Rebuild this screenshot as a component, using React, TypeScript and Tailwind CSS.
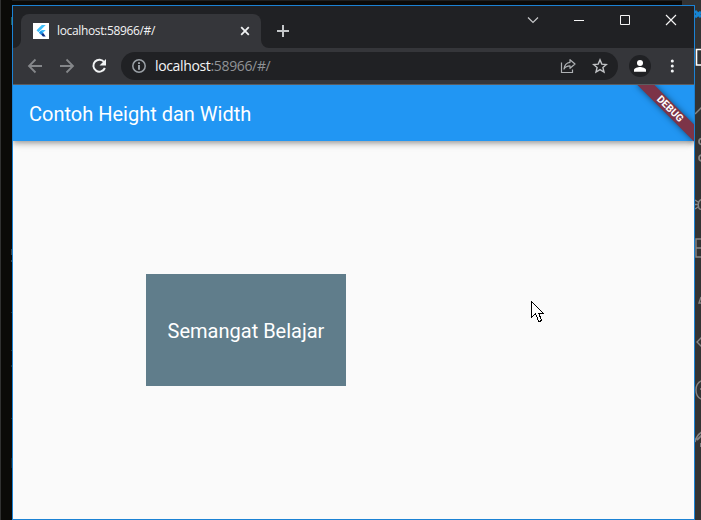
import React from "react";

const FlutterLogo = () => (
  <svg width="16" height="16" viewBox="0 0 16 16" className="shrink-0 bg-white">
    <path d="M8.800 2h3.900L5.500 9.200 3.500 7.300z" fill="#42c0fa" />
    <path d="M8.900 7.100h3.800L10 9.800 8.100 11.700 6 9.700z" fill="#42c0fa" />
    <path d="M8.100 11.500 10 9.700l2.700 3.900H9.900z" fill="#0b2f87" />
    <path d="m6 9.700 2-1.900 2 1.900-2 1.900z" fill="#1d90e6" />
  </svg>
);

const TabStrip = () => (
  <div className="relative flex h-[42px] shrink-0 bg-[#202124]">
    <div className="relative ml-2 mt-2 flex h-[34px] w-[240px] items-center rounded-t-lg bg-[#35363a] pl-3 pr-[10px]">
      <FlutterLogo />
      <span className="ml-2 whitespace-nowrap font-['Open_Sans','Noto_Sans',sans-serif] text-[12px] leading-4 tracking-[-0.35px] text-[#f2f3f4]">
        localhost:58966/#/
      </span>
      <svg width="12" height="12" viewBox="0 0 12 12" className="ml-auto" fill="none" stroke="#f1f3f4" strokeWidth="1.8">
        <path d="m2.2 2.2 7.6 7.6M9.8 2.2 2.2 9.8" />
      </svg>
      <svg width="8" height="8" viewBox="0 0 8 8" className="absolute -left-2 bottom-0">
        <path d="M8 0v8H0a8 8 0 0 0 8-8" fill="#35363a" />
      </svg>
      <svg width="8" height="8" viewBox="0 0 8 8" className="absolute -right-2 bottom-0">
        <path d="M0 0v8h8a8 8 0 0 1-8-8" fill="#35363a" />
      </svg>
    </div>
    <svg width="14" height="14" viewBox="0 0 14 14" className="ml-[15px] mt-[18px]" fill="none" stroke="#c4c7c9" strokeWidth="2">
      <path d="M7 1v12M1 7h12" />
    </svg>
    <div className="ml-auto flex h-7 text-[#f5f5f5]">
      <svg width="46" height="28" viewBox="0 0 46 28" fill="none" stroke="#c7c8ca" strokeWidth="1.2">
        <path d="m16 11.500 5 5 5-5" />
      </svg>
      <svg width="46" height="28" viewBox="0 0 46 28" fill="none" stroke="currentColor">
        <path d="M16 14.500h10" />
      </svg>
      <svg width="46" height="28" viewBox="0 0 46 28" fill="none" stroke="currentColor">
        <path d="M16.500 9.500h9v9h-9z" />
      </svg>
      <svg width="44" height="28" viewBox="0 0 44 28" fill="none" stroke="currentColor" strokeWidth="1.15">
        <path d="m16 9 10 10M26 9 16 19" />
      </svg>
    </div>
  </div>
);

const Toolbar = () => (
  <div className="flex h-[36px] shrink-0 items-center bg-[#35363a]">
    <svg width="16" height="16" viewBox="0 0 16 16" className="ml-[14px]" fill="none" stroke="#85878a" strokeWidth="1.8">
      <path d="M15 8H2.5M8.5 1.5 2 8l6.5 6.5" />
    </svg>
    <svg width="16" height="16" viewBox="0 0 16 16" className="ml-4" fill="none" stroke="#85878a" strokeWidth="1.8">
      <path d="M1 8h12.5M7.5 1.5 14 8l-6.5 6.5" />
    </svg>
    <svg width="16" height="16" viewBox="0 0 16 16" className="ml-4">
      <path d="M13.3 4.2A6 6 0 1 0 13.9 10" fill="none" stroke="#f1f3f4" strokeWidth="2" />
      <path d="M15 1v6.500H8.500z" fill="#f1f3f4" />
    </svg>
    <div className="ml-[14px] flex h-7 w-[497px] items-center rounded-full bg-[#202124] pl-[11px] pr-[10px]">
      <svg width="14" height="14" viewBox="0 0 14 14" fill="none" stroke="#9aa0a6" strokeWidth="1.5">
        <circle cx="7" cy="7" r="6.2" />
        <path d="M7 3.300v1.600M7 6v4.800" strokeWidth="2" />
      </svg>
      <span className="ml-[9px] whitespace-nowrap font-['Open_Sans','Noto_Sans',sans-serif] text-[14px] leading-5 tracking-[-0.35px] text-[#8f9296]">
        <span className="text-[#f4f5f6]">localhost</span>:58966/#/
      </span>
      <svg width="16" height="16" viewBox="0 0 16 16" className="ml-auto" fill="none" stroke="#aeb1b4" strokeWidth="1.2">
        <path d="M1.500 4.500v10h11v-3" />
        <path d="M10 1.700 15 6l-5 4.300V7.800C7 7.800 5.200 8.800 4 11c.4-3.700 2.500-6.300 6-6.700z" strokeLinejoin="round" />
      </svg>
      <svg width="16" height="16" viewBox="0 0 16 16" className="ml-4" fill="none" stroke="#c1c3c6" strokeWidth="1.4">
        <path d="m8 1.900 1.800 4.200 4.600.4-3.500 3 1.100 4.500L8 11.600 4 14l1.100-4.500-3.500-3 4.600-.4z" />
      </svg>
    </div>
    <svg width="22" height="22" viewBox="0 0 22 22" className="ml-[11px]">
      <circle cx="11" cy="11" r="11" fill="#202124" />
      <circle cx="11" cy="8" r="3" fill="#fff" />
      <path d="M5 16.800v-1.700c0-2.100 3.900-3.100 6-3.100s6 1 6 3.100v1.700z" fill="#fff" />
    </svg>
    <svg width="4" height="14" viewBox="0 0 4 14" className="ml-[19px]" fill="#f1f3f4">
      <circle cx="2.3" cy="2" r="1.55" />
      <circle cx="2.3" cy="7" r="1.55" />
      <circle cx="2.3" cy="12" r="1.55" />
    </svg>
  </div>
);

const Page = () => (
  <main className="relative flex-1 overflow-hidden bg-[#fafafa] font-[Roboto,sans-serif]">
    <header className="flex h-14 items-center bg-[#2196f3] px-4 text-[20px] leading-6 text-white shadow-[0_2px_4px_-1px_rgba(0,0,0,0.2),0_4px_5px_0_rgba(0,0,0,0.14),0_1px_10px_0_rgba(0,0,0,0.12)]">
      <h1 className="whitespace-nowrap pt-0.5">Contoh Height dan Width</h1>
    </header>
    <div className="ml-[133px] mt-[133px] flex h-28 w-[200px] items-center justify-center bg-[#607d8b] text-[20px] leading-6 text-white">
      <span className="whitespace-nowrap pt-0.5">Semangat Belajar</span>
    </div>
    <div className="absolute -right-10 top-7 flex h-3 w-20 origin-[40px_-28px] rotate-45 items-center justify-center bg-[#7c3448] text-[10.2px] font-bold leading-3 text-white shadow-[0_0_6px_rgba(0,0,0,0.5)]">
      DEBUG
    </div>
  </main>
);

const ActivityBar = () => (
  <svg width="6" height="520" viewBox="695 0 6 520" className="shrink-0 bg-[#333]" fill="none" stroke="#858585" strokeWidth="1.4">
    <path d="m695 11 6 6m-6 0 6-5" stroke="#1684d2" strokeWidth="3" />
    <path d="M702 49.500h-5.500v15.500h5.500" stroke="#fff" strokeWidth="1.6" />
    <path d="m695 114 7-7" />
    <path d="M702 138.500c-4 0-4 6 0 6M702 155c-4 0-4 6 0 6" strokeWidth="1.7" />
    <path d="M702 199.500c-5 1-5 10 0 10M695 200l3 2M695 204.500h3M695 209l3-2" />
    <path d="M702 239h-6v18h6M696 248h6" />
    <path d="M701 297l-2 6h3" />
    <path d="m702 337-5 5 5 5" />
    <path d="M702 380.500c-8 3-8 16 0 19M701 389h-1" />
    <path d="M695 442c1-5 3-8 7-10M697 440l5-5M701 443v4" strokeWidth="1.8" />
  </svg>
);

const WindowsCursor = () => (
  <svg width="13" height="21" viewBox="0 0 13 21" className="absolute left-[531px] top-[301px]" shapeRendering="crispEdges">
    <path d="M.5.5v16l4-4 3 7.500h2l1-1-3-7h4.500z" fill="#fff" stroke="#000" />
  </svg>
);

export default function App() {
  return (
    <div className="relative flex h-[520px] w-[701px] overflow-hidden bg-[#0b0a08]">
      <div className="relative w-3 shrink-0 border-l border-[#323232]">
        <i className="absolute left-[10px] top-[17px] h-2 w-px bg-[#245e5e]" />
        <i className="absolute left-[10px] top-[249px] h-[6px] w-px bg-[#38454b]" />
        <i className="absolute left-[10px] top-[260px] h-0.5 w-px bg-[#38454b]" />
        <i className="absolute left-[10px] top-[312px] h-px w-px bg-[#283733]" />
        <i className="absolute left-[10px] top-[350px] h-px w-px bg-[#283733]" />
        <i className="absolute left-[10px] top-[365px] h-0.5 w-px bg-[#22312e]" />
        <i className="absolute left-[10px] top-[418px] h-px w-px bg-[#22312e]" />
        <i className="absolute left-[10px] top-[458px] h-[10px] w-px bg-[#14252b]" />
      </div>
      <div className="flex w-[683px] shrink-0 flex-col">
        <div className="flex h-[5px] shrink-0 justify-end border-t border-[#202020]">
          <div className="-mt-px h-[5px] w-[13px] bg-[#333]" />
        </div>
        <section className="flex flex-1 flex-col border border-[#1b82d4]">
          <TabStrip />
          <Toolbar />
          <div className="h-px shrink-0 bg-[#5b5c5f]" />
          <Page />
        </section>
      </div>
      <ActivityBar />
      <WindowsCursor />
    </div>
  );
}
